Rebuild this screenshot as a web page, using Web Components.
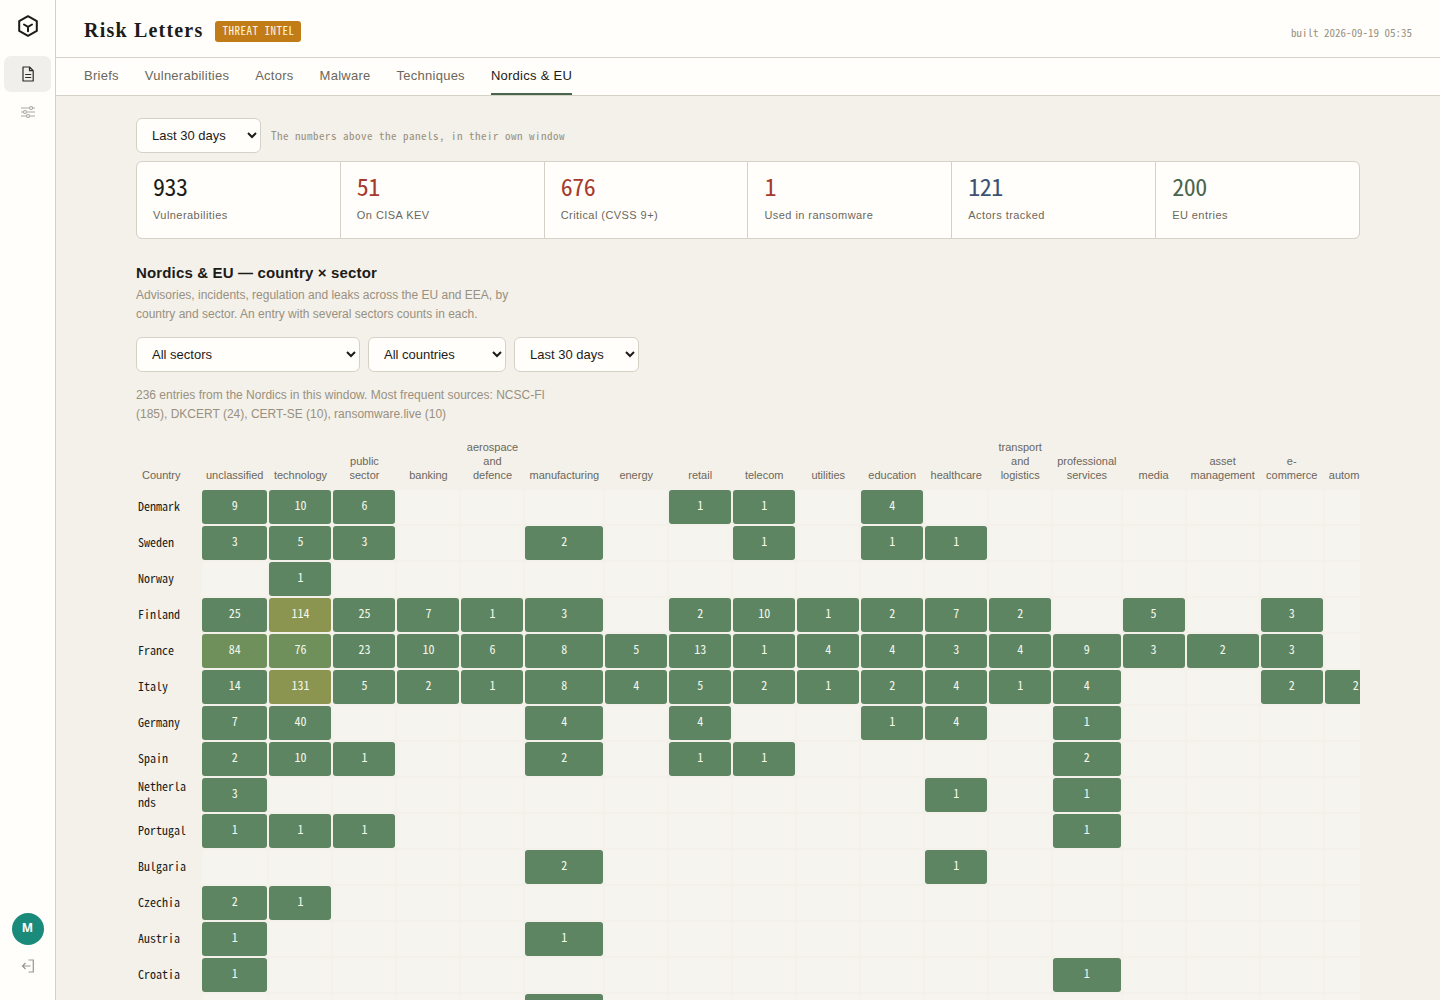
<!DOCTYPE html>
<html lang="en">
<head>
<meta charset="utf-8">
<meta name="viewport" content="width=device-width, initial-scale=1">
<title>Risk Letters</title>
<style>
  :root {
    --bg: #f4f1ea;
    --surface: #fffefb;
    --line: #d4d1c7;
    --ink: #1c1b18;
    --muted: #6b675c;
    --faint: #989080;
    --red: #a63a2b;
    --blue: #3d5273;
    --green: #4a654e;
    --amber: #c27c17;
    --sans: "Liberation Sans", Arial, sans-serif;
    --serif: "Liberation Serif", serif;
    --mono: "Noto Sans Mono CJK SC", "Noto Sans Mono CJK JP", monospace;
  }
  body { margin: 0; background: var(--bg); color: var(--ink); font-family: var(--sans); }
</style>
</head>
<body>
<app-shell>
  <side-rail slot="rail"></side-rail>
  <page-header slot="header" tag="THREAT INTEL" built="built 2026-09-19 05:35">Risk Letters</page-header>
  <tab-bar slot="tabs" items="Briefs|Vulnerabilities|Actors|Malware|Techniques|Nordics &amp; EU" current="Nordics &amp; EU"></tab-bar>

  <select-field value="Last 30 days" note="The numbers above the panels, in their own window"></select-field>
  <stat-grid>
    <stat-card value="933">Vulnerabilities</stat-card>
    <stat-card value="51" tone="red">On CISA KEV</stat-card>
    <stat-card value="676" tone="red">Critical (CVSS 9+)</stat-card>
    <stat-card value="1" tone="red">Used in ransomware</stat-card>
    <stat-card value="121" tone="blue">Actors tracked</stat-card>
    <stat-card value="200" tone="green">EU entries</stat-card>
  </stat-grid>
  <panel-section heading="Nordics &amp; EU — country × sector">
    <span slot="lead">Advisories, incidents, regulation and leaks across the EU and EEA, by country and sector. An entry with several sectors counts in each.</span>
    <select-field slot="filters" value="All sectors" label="Sector" size="large"></select-field>
    <select-field slot="filters" value="All countries" label="Country" size="medium"></select-field>
    <select-field slot="filters" value="Last 30 days" label="Window"></select-field>
    <span slot="summary">236 entries from the Nordics in this window. Most frequent sources: NCSC-FI (185), DKCERT (24), CERT-SE (10), ransomware.live (10)</span>
    <heat-map></heat-map>
  </panel-section>
</app-shell>

<script>
const define = (name, html, setup) => {
  const template = document.createElement('template');
  template.innerHTML = html;
  customElements.define(name, class extends HTMLElement {
    connectedCallback() {
      if (this.shadowRoot) return;
      const root = this.attachShadow({ mode: 'open' });
      root.append(template.content.cloneNode(true));
      if (setup) setup(this, root);
    }
  });
};

define('app-shell', `
<style>
  :host { display: flex; height: 100vh; }
  .column { flex: 1; min-width: 0; display: flex; flex-direction: column; }
  main { flex: 1; min-height: 0; overflow-y: auto; scrollbar-width: none; padding: 22px 80px; display: flex; flex-direction: column; gap: 8px; }
  ::slotted(*) { flex-shrink: 0; }
</style>
<slot name="rail"></slot>
<div class="column">
  <slot name="header"></slot>
  <slot name="tabs"></slot>
  <main><slot></slot></main>
</div>`);

define('side-rail', `
<style>
  :host { display: flex; flex-direction: column; align-items: center; box-sizing: border-box; width: 56px; padding: 14px 4px 21px; background: var(--surface); border-right: 1px solid var(--line); }
  svg { display: block; fill: none; stroke: currentColor; }
  a, button { display: flex; align-items: center; justify-content: center; color: var(--ink); }
  nav { display: flex; flex-direction: column; gap: 2px; align-self: stretch; margin-top: 18px; }
  nav a { height: 36px; border-radius: 7px; color: #aaa79f; }
  nav a[aria-current] { background: #f0efec; color: #2b2a27; }
  .foot { margin-top: auto; display: flex; flex-direction: column; align-items: center; gap: 8px; }
  button { border: 0; padding: 0; background: none; cursor: pointer; }
  .avatar { width: 32px; height: 32px; border-radius: 50%; background: #1a8a7a; color: #fff; font: 700 12px/30px "Noto Sans", sans-serif; padding-bottom: 2px; }
  .leave { width: 26px; height: 26px; color: #98958d; }
</style>
<a href="#" aria-label="Home">
  <svg width="24" height="24" viewBox="0 0 24 24" stroke="#0c0c0c" stroke-width="2" stroke-linejoin="round" stroke-linecap="round"><path d="M12 2.200 20.800 7.100v9.800L12 21.800 3.200 16.900V7.100z"/><path d="M8 10.500 12 12.800l4-2.300M12 12.800v4.400"/></svg>
</a>
<nav aria-label="Sections">
  <a href="#" aria-current="page" aria-label="Letters"><svg width="16" height="18" viewBox="0 0 16 18" stroke-width="1.200" stroke-linejoin="round"><path d="M3 2h6.500L13.200 5.700V16H3zM9.500 2v3.700h3.700M5.200 9.500h6M5.200 12.500h6"/></svg></a>
  <a href="#" aria-label="Settings"><svg width="16" height="14" viewBox="0 0 16 14" stroke-width="1.100"><path d="M1 3h8.500M12.700 3H15M1 7h2.400M6.600 7H15M1 11h5.400M9.600 11H15"/><circle cx="11.100" cy="3" r="1.500"/><circle cx="5" cy="7" r="1.500"/><circle cx="8" cy="11" r="1.500"/></svg></a>
</nav>
<div class="foot">
  <button class="avatar" aria-label="Account">M</button>
  <button class="leave" aria-label="Sign out"><svg width="14" height="14" viewBox="0 0 14 14" stroke-width="1.200"><path d="M7.500 1h4.800v12H7.500M9.500 7H1.500M4.500 4 1.500 7l3 3"/></svg></button>
</div>`);

define('page-header', `
<style>
  :host { display: block; background: var(--surface); border-bottom: 1px solid var(--line); }
  header { display: flex; align-items: center; gap: 12px; height: 57px; padding: 0 28px; }
  h1 { margin: 0; font: 700 20px/24px var(--serif); letter-spacing: .06em; padding-top: 2px; }
  .tag { padding: 0 7px 2px; border-radius: 3px; background: var(--amber); color: #fff6e2; font: 11px/19px var(--mono); letter-spacing: .5px; margin-top: 6px; }
  time { margin: 6px 0 0 auto; font: 11px/16px var(--mono); color: var(--faint); }
</style>
<header><h1><slot></slot></h1><span class="tag"></span><time></time></header>`,
(host, root) => {
  root.querySelector('.tag').textContent = host.getAttribute('tag');
  root.querySelector('time').textContent = host.getAttribute('built');
});

define('tab-bar', `
<style>
  :host { display: block; background: var(--surface); border-bottom: 1px solid var(--line); }
  nav { display: flex; gap: 26px; padding: 0 28px; }
  a { color: var(--muted); text-decoration: none; font-size: 13px; line-height: 35px; letter-spacing: .02em; border-bottom: 2px solid transparent; }
  a[aria-current] { color: var(--ink); border-color: var(--green); }
</style>
<nav aria-label="Views"></nav>`,
(host, root) => {
  for (const item of host.getAttribute('items').split('|')) {
    const link = document.createElement('a');
    link.href = '#';
    link.textContent = item;
    if (item === host.getAttribute('current')) link.setAttribute('aria-current', 'page');
    root.querySelector('nav').append(link);
  }
});

define('select-field', `
<style>
  :host { display: flex; align-items: center; gap: 10px; }
  select { box-sizing: border-box; width: 125px; height: 35px; padding: 0 11px; border: 1px solid var(--line); border-radius: 6px; background-color: var(--surface); color: var(--ink); font: 13px var(--sans); }
  :host([size="medium"]) select { width: 138px; }
  :host([size="large"]) select { width: 224px; }
  label { padding-bottom: 2px; font: 11px/16px var(--mono); letter-spacing: .5px; color: var(--faint); }
</style>
<select id="choice"><option></option></select><label for="choice"></label>`,
(host, root) => {
  root.querySelector('option').textContent = host.getAttribute('value');
  const label = root.querySelector('label');
  if (host.hasAttribute('note')) label.textContent = host.getAttribute('note');
  else {
    label.remove();
    root.querySelector('select').setAttribute('aria-label', host.getAttribute('label'));
  }
});

define('stat-grid', `
<style>
  :host { display: grid; grid-template-columns: repeat(6, 1fr); gap: 1px; background: var(--line); border: 1px solid var(--line); border-radius: 6px; overflow: hidden; }
</style>
<slot></slot>`);

define('stat-card', `
<style>
  :host { display: block; padding: 10px 16px 15px; background: var(--surface); }
  .value { font: 24px/28px var(--mono); letter-spacing: -.02em; }
  :host([tone="red"]) .value { color: var(--red); }
  :host([tone="blue"]) .value { color: var(--blue); }
  :host([tone="green"]) .value { color: var(--green); }
  .label { margin-top: 7px; font-size: 11px; line-height: 16px; letter-spacing: .04em; color: var(--muted); }
</style>
<div class="value"></div><div class="label"><slot></slot></div>`,
(host, root) => { root.querySelector('.value').textContent = host.getAttribute('value'); });

define('panel-section', `
<style>
  :host { display: block; margin-top: 16px; }
  h2 { margin: 0; font: 700 15px/20px var(--sans); letter-spacing: .01em; }
  p { margin: 0; max-width: 412px; font-size: 12px; line-height: 19px; color: var(--faint); }
  h2 + p { margin-top: 3px; }
  .filters { display: flex; gap: 8px; margin: 13px 0 14px; }
  .scroll { margin-top: 14px; overflow-x: auto; scrollbar-width: none; }
</style>
<h2></h2>
<p><slot name="lead"></slot></p>
<div class="filters"><slot name="filters"></slot></div>
<p><slot name="summary"></slot></p>
<div class="scroll"><slot></slot></div>`,
(host, root) => { root.querySelector('h2').textContent = host.getAttribute('heading'); });

const SECTORS = ['unclassified', 'technology', 'public sector', 'banking', 'aerospace and defence', 'manufacturing', 'energy', 'retail', 'telecom', 'utilities', 'education', 'healthcare', 'transport and logistics', 'professional services', 'media', 'asset management', 'e-commerce', 'automotive'];
const COUNTS = {
  Denmark:     [9, 10, 6, 0, 0, 0, 0, 1, 1, 0, 4, 0, 0, 0, 0, 0, 0, 0],
  Sweden:      [3, 5, 3, 0, 0, 2, 0, 0, 1, 0, 1, 1, 0, 0, 0, 0, 0, 0],
  Norway:      [0, 1, 0, 0, 0, 0, 0, 0, 0, 0, 0, 0, 0, 0, 0, 0, 0, 0],
  Finland:     [25, 114, 25, 7, 1, 3, 0, 2, 10, 1, 2, 7, 2, 0, 5, 0, 3, 0],
  France:      [84, 76, 23, 10, 6, 8, 5, 13, 1, 4, 4, 3, 4, 9, 3, 2, 3, 0],
  Italy:       [14, 131, 5, 2, 1, 8, 4, 5, 2, 1, 2, 4, 1, 4, 0, 0, 2, 2],
  Germany:     [7, 40, 0, 0, 0, 4, 0, 4, 0, 0, 1, 4, 0, 1, 0, 0, 0, 0],
  Spain:       [2, 10, 1, 0, 0, 2, 0, 1, 1, 0, 0, 0, 0, 2, 0, 0, 0, 0],
  Netherlands: [3, 0, 0, 0, 0, 0, 0, 0, 0, 0, 0, 1, 0, 1, 0, 0, 0, 0],
  Portugal:    [1, 1, 1, 0, 0, 0, 0, 0, 0, 0, 0, 0, 0, 1, 0, 0, 0, 0],
  Bulgaria:    [0, 0, 0, 0, 0, 2, 0, 0, 0, 0, 0, 1, 0, 0, 0, 0, 0, 0],
  Czechia:     [2, 1, 0, 0, 0, 0, 0, 0, 0, 0, 0, 0, 0, 0, 0, 0, 0, 0],
  Austria:     [1, 0, 0, 0, 0, 1, 0, 0, 0, 0, 0, 0, 0, 0, 0, 0, 0, 0],
  Croatia:     [1, 0, 0, 0, 0, 0, 0, 0, 0, 0, 0, 0, 0, 1, 0, 0, 0, 0],
  Belgium:     [0, 0, 0, 0, 0, 1, 0, 0, 0, 0, 0, 0, 0, 0, 0, 0, 0, 0],
};

define('heat-map', `
<style>
  :host { display: block; }
  table { width: 100%; border-collapse: separate; border-spacing: 2px; }
  thead th { padding: 0 4px 6px; vertical-align: bottom; font-weight: 400; font-size: 11px; line-height: 14px; color: var(--muted); }
  thead th:first-child { text-align: left; }
  tbody th { box-sizing: border-box; width: 62px; min-width: 62px; padding: 0 10px 2px 0; text-align: left; font: 12px/16px var(--mono); overflow-wrap: anywhere; }
  td { box-sizing: border-box; min-width: 62px; height: 34px; padding: 0 0 4px; border-radius: 3px; text-align: center; background: #f6f4ef; font: 12px/16px var(--mono); color: #f4f8ec; }
  .low { background: #5e8562; }
  .mid { background: #6f8f5b; }
  .high { background: #8b9550; }
</style>
<table><thead><tr><th scope="col">Country</th></tr></thead><tbody></tbody></table>`,
(host, root) => {
  const head = root.querySelector('thead tr');
  for (const sector of SECTORS) {
    const th = document.createElement('th');
    th.scope = 'col';
    th.textContent = sector;
    head.append(th);
  }
  for (const [country, counts] of Object.entries(COUNTS)) {
    const row = root.querySelector('tbody').insertRow();
    const th = document.createElement('th');
    th.scope = 'row';
    th.textContent = country;
    row.append(th);
    for (const count of counts) {
      const cell = row.insertCell();
      if (!count) continue;
      cell.textContent = count;
      cell.className = count > 100 ? 'high' : count > 60 ? 'mid' : 'low';
    }
  }
});
</script>
</body>
</html>
